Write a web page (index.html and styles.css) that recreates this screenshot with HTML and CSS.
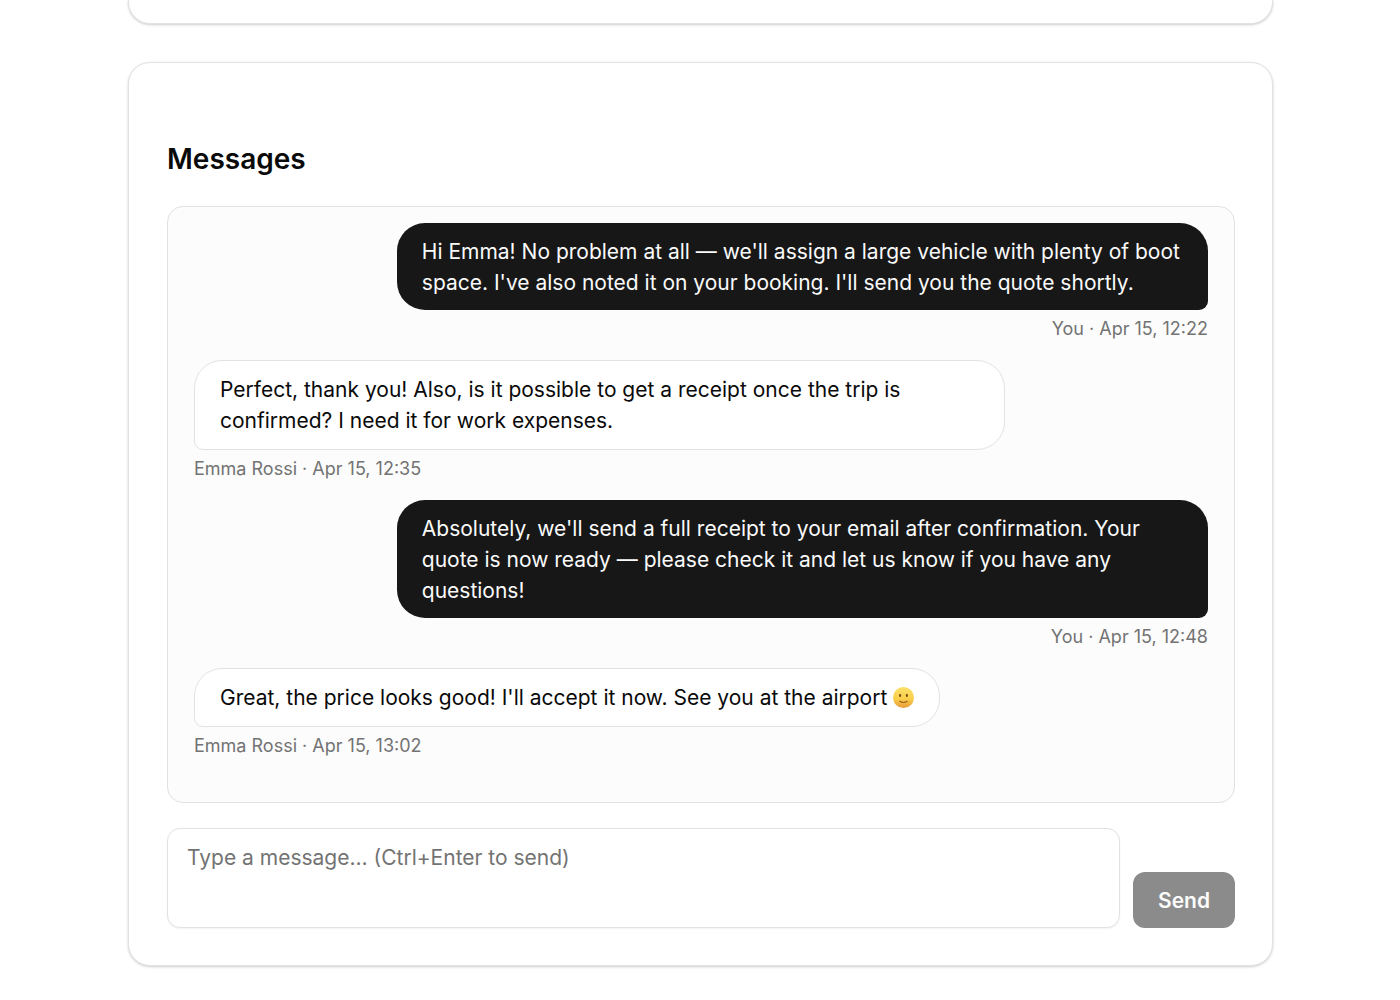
FILE: index.html
```html
<!DOCTYPE html>
<html lang="en">
<head>
    <meta charset="utf-8">
    <meta name="viewport" content="width=device-width, initial-scale=1">
    <title>Messages</title>
    <link rel="stylesheet" href="styles.css">
</head>
<body>
    <main class="page">
        <!-- end of the previous card -->
        <div class="card card-end"></div>

        <section class="card messages">
            <h2>Messages</h2>

            <div class="thread">
                <div class="message sent">
                    <p class="bubble">Hi Emma! No problem at all — we'll assign a large vehicle with plenty of boot space. I've also noted it on your booking. I'll send you the quote shortly.</p>
                    <p class="meta">You · Apr 15, 12:22</p>
                </div>
                <div class="message received">
                    <p class="bubble">Perfect, thank you! Also, is it possible to get a receipt once the trip is confirmed? I need it for work expenses.</p>
                    <p class="meta">Emma Rossi · Apr 15, 12:35</p>
                </div>
                <div class="message sent">
                    <p class="bubble">Absolutely, we'll send a full receipt to your email after confirmation. Your quote is now ready — please check it and let us know if you have any questions!</p>
                    <p class="meta">You · Apr 15, 12:48</p>
                </div>
                <div class="message received">
                    <p class="bubble">Great, the price looks good! I'll accept it now. See you at the airport <svg class="emoji" viewBox="0 0 20 20" role="img" aria-label="smile">
                        <defs>
                            <linearGradient id="face" x1="0" y1="0" x2="0" y2="1">
                                <stop offset="0" stop-color="#fbe06a"/>
                                <stop offset="0.55" stop-color="#fad04b"/>
                                <stop offset="1" stop-color="#e8993a"/>
                            </linearGradient>
                        </defs>
                        <circle cx="10" cy="10" r="10" fill="url(#face)"/>
                        <ellipse cx="6.8" cy="8" rx="1" ry="1.6" fill="#7a4a16"/>
                        <ellipse cx="13.2" cy="8" rx="1" ry="1.6" fill="#7a4a16"/>
                        <path d="M6.4 13.6Q10 15.8 13.6 13.6" fill="none" stroke="#96601c" stroke-width="1" stroke-linecap="round"/>
                    </svg></p>
                    <p class="meta">Emma Rossi · Apr 15, 13:02</p>
                </div>
            </div>

            <form class="composer">
                <textarea aria-label="Message" placeholder="Type a message… (Ctrl+Enter to send)"></textarea>
                <button type="submit" disabled>Send</button>
            </form>
        </section>
    </main>
</body>
</html>
```

FILE: styles.css
```css
* {
    box-sizing: border-box;
}

body {
    margin: 0;
    background-color: #fff;
    color: #0a0a0a;
    font: 21px/31px Inter, "Liberation Sans", sans-serif;
}

h2,
p {
    margin: 0;
}

.page {
    display: flex;
    flex-direction: column;
    gap: 38px;
    padding: 0 127px 32px 128px;
}

.card {
    border: 1px solid #e2e2e2;
    border-radius: 22px;
    background-color: #fff;
    box-shadow: 0 1px 3px rgba(0, 0, 0, 0.12), 0 1px 2px rgba(0, 0, 0, 0.08);
}

.card-end {
    height: 24px;
    border-top: 0;
    border-radius: 0 0 22px 22px;
}

.messages {
    padding: 78px 37px 37px 38px;
}

.messages h2 {
    font-size: 28px;
    font-weight: 600;
    line-height: 36px;
}

.thread {
    display: flex;
    flex-direction: column;
    gap: 19px;
    margin: 29px 0 25px;
    padding: 16px 26px 44px;
    border: 1px solid #e2e2e2;
    border-radius: 16px;
    background-color: #fcfcfc;
}

.message {
    display: flex;
    flex-direction: column;
    gap: 6px;
    align-items: flex-start;
}

.sent {
    align-items: flex-end;
}

.bubble {
    max-width: 80%;
    padding: 13px 25px 12px;
    border-radius: 28px;
}

.sent .bubble {
    background-color: #171717;
    color: #fafafa;
    border-bottom-right-radius: 9px;
}

.received .bubble {
    padding: 13px 25px;
    border: 1px solid #e2e2e2;
    border-bottom-left-radius: 9px;
    background-color: #fff;
}

.meta {
    color: #737373;
    font-size: 18px;
    line-height: 25px;
}

.emoji {
    width: 21px;
    height: 21px;
    vertical-align: -3px;
}

.composer {
    display: flex;
    align-items: flex-end;
    gap: 13px;
}

.composer textarea {
    flex: 1;
    height: 100px;
    padding: 13px 19px;
    border: 1px solid #e2e2e2;
    border-radius: 13px;
    background-color: #fff;
    color: inherit;
    font: inherit;
    resize: none;
    box-shadow: 0 1px 2px rgba(0, 0, 0, 0.05);
}

.composer textarea::placeholder {
    color: #737373;
}

.composer button {
    height: 56px;
    padding: 0 25px;
    border: 0;
    border-radius: 12px;
    background-color: #8b8b8b;
    color: #fcfcfc;
    font: inherit;
    font-weight: 600;
}
```
